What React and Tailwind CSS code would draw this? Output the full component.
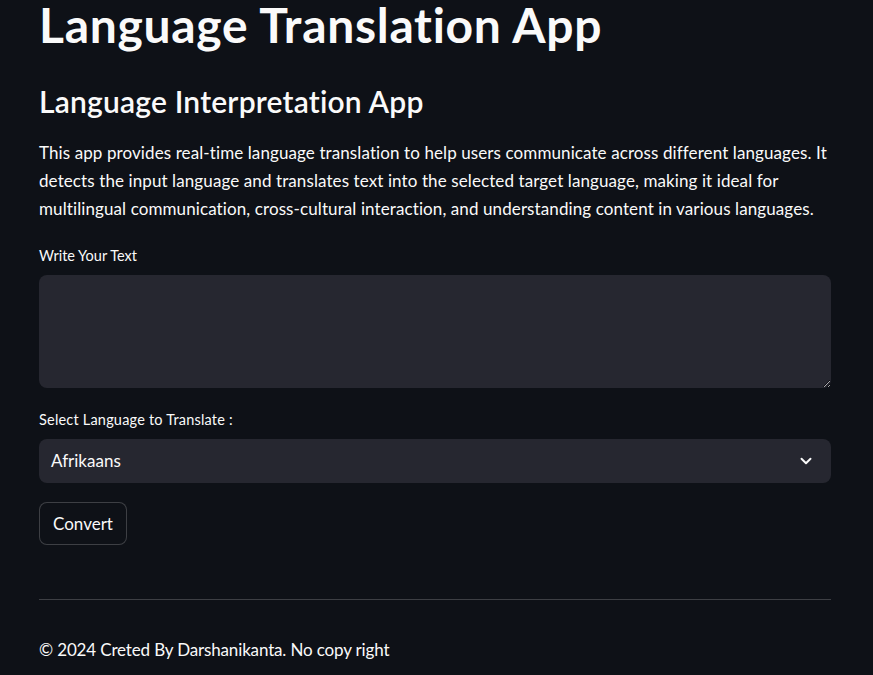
import React from "react";
import { ChevronDown } from "lucide-react";

export default function App() {
  return (
    <div
      className="min-h-screen w-full overflow-hidden bg-[#0e1117] text-[#fafafa]"
      style={{ fontFamily: "Lato, 'Noto Sans', sans-serif" }}
    >
      <div className="ml-[39px] flex w-[792px] flex-col">
        <h1 className="whitespace-nowrap text-[48px] font-bold leading-[50px] tracking-[0.7px]">
          Language Translation App
        </h1>
        <h2 className="mt-[33px] text-[30px] font-semibold leading-[36px] tracking-[0.2px]">
          Language Interpretation App
        </h2>
        <p className="mt-[20px] text-[17px] leading-[28px] tracking-[0.1px]">
          This app provides real-time language translation to help users communicate across different languages. It
          detects the input language and translates text into the selected target language, making it ideal for
          multilingual communication, cross-cultural interaction, and understanding content in various languages.
        </p>

        <label className="mt-[21px] text-[14.5px] leading-[24px]">Write Your Text</label>
        <textarea
          className="mt-[7px] h-[113px] w-full resize-y rounded-lg bg-[#262730] px-3 py-3 text-[17px] text-[#fafafa] outline-none [color-scheme:dark]"
        />

        <label className="mt-[20px] text-[14.5px] leading-[24px] tracking-[0.2px]">Select Language to Translate :</label>
        <div className="mt-[7px] flex h-[44px] w-full items-center justify-between rounded-lg bg-[#262730] pl-3 pr-4">
          <span className="text-[17px]">Afrikaans</span>
          <ChevronDown size={18} strokeWidth={2.6} className="text-[#fafafa]" />
        </div>

        <div className="mt-[19px]">
          <button className="h-[43px] rounded-lg border border-[rgba(250,250,250,0.2)] bg-[#0e1117] px-[13px] text-[17px] text-[#fafafa]">
            Convert
          </button>
        </div>

        <hr className="mt-[54px] border-0 border-t border-[rgba(250,250,250,0.2)]" />

        <p className="mt-[36px] text-[17px] leading-[28px] tracking-[-0.15px]">© 2024 Creted By Darshanikanta. No copy right</p>
      </div>
    </div>
  );
}
